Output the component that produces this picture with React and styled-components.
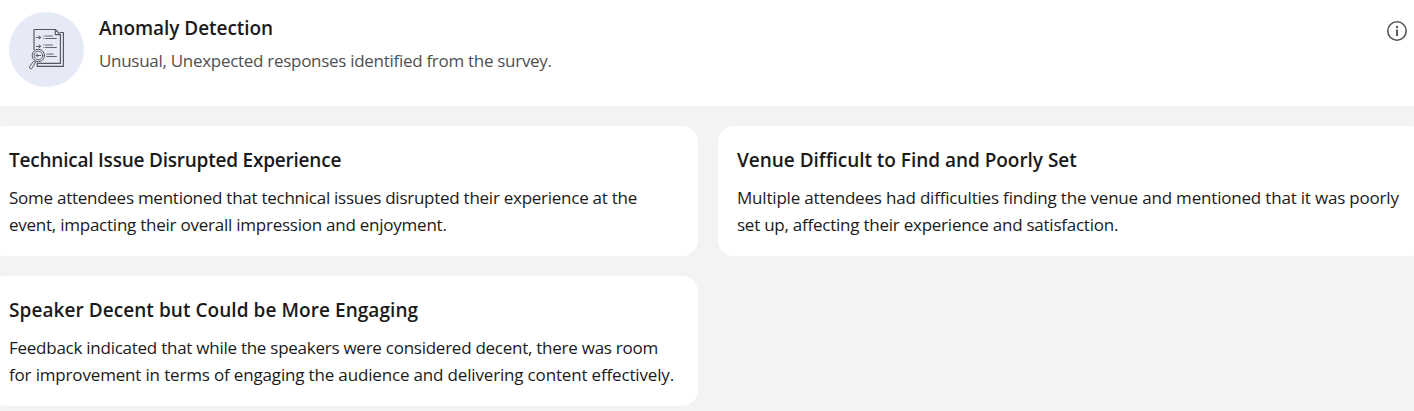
import React from "react";
import styled, { createGlobalStyle } from "styled-components";

const GlobalStyle = createGlobalStyle`
  *, *::before, *::after { box-sizing: border-box; }
  body {
    margin: 0;
    background: #f3f3f3;
    font-family: "Segoe UI", "Open Sans", "Noto Sans", sans-serif;
    font-variant-ligatures: none;
    color: #1a1a1a;
    overflow: hidden;
  }
  h2, h3, p { margin: 0; }
`;

const Page = styled.main`
  height: 411px;
  overflow: hidden;
`;

const Header = styled.header`
  display: flex;
  align-items: flex-start;
  height: 106px;
  padding: 12px 7px 0 9px;
  background: #fff;
`;

const IconBadge = styled.div`
  flex: none;
  width: 75px;
  height: 75px;
  margin-right: 15px;
  border-radius: 50%;
  background: #e6e9f6;

  svg { display: block; }
`;

const HeaderText = styled.div`
  flex: 1;
  padding-top: 2px;
`;

const Title = styled.h2`
  font-size: 19px;
  font-weight: 600;
  line-height: 28px;
  letter-spacing: ${(p) => p.$tracking || 0}px;
  white-space: nowrap;
`;

const Subtitle = styled.p`
  margin-top: 5px;
  font-size: 17px;
  line-height: 27px;
  color: #505050;
  letter-spacing: ${(p) => p.$tracking || 0}px;
`;

const InfoButton = styled.button`
  flex: none;
  margin-top: 9px;
  padding: 0;
  border: 0;
  background: none;

  svg { display: block; }
`;

const CardGrid = styled.section`
  display: grid;
  grid-template-columns: repeat(2, 708px);
  grid-auto-rows: 130px;
  gap: 20px;
  margin: 20px 0 0 -10px;
`;

const Card = styled.article`
  padding: 20px 19px;
  border-radius: 16px;
  background: #fff;
`;

const CardBody = styled.p`
  margin-top: 10px;
  font-size: 17px;
  line-height: 27px;
`;

const Line = styled.span`
  display: block;
  white-space: nowrap;
  letter-spacing: ${(p) => p.$tracking || 0}px;
`;

const cards = [
  {
    title: "Technical Issue Disrupted Experience",
    tracking: -0.22,
    lines: [
      ["Some attendees mentioned that technical issues disrupted their experience at the", -0.26],
      ["event, impacting their overall impression and enjoyment.", -0.24],
    ],
  },
  {
    title: "Venue Difficult to Find and Poorly Set",
    tracking: -0.03,
    lines: [
      ["Multiple attendees had difficulties finding the venue and mentioned that it was poorly", -0.19],
      ["set up, affecting their experience and satisfaction.", -0.24],
    ],
  },
  {
    title: "Speaker Decent but Could be More Engaging",
    tracking: 0.06,
    lines: [
      ["Feedback indicated that while the speakers were considered decent, there was room", -0.256],
      ["for improvement in terms of engaging the audience and delivering content effectively.", -0.165],
    ],
  },
];

function ReportSearchIcon() {
  return (
    <svg width="75" height="75" viewBox="9 12 75 75" fill="none" stroke="#55565e" strokeLinecap="round" strokeLinejoin="round">
      <path d="M34 49.5V29.5H55.3L60.4 34.6V63.4H37.5" strokeWidth="1.15" />
      <path d="M55.3 29.5V34.6H60.4" strokeWidth="1.15" />
      <path d="M60.4 32.5H63.4V66.4H37.2V63.4" strokeWidth="1.15" />
      <path d="M36.3 37.4H40.6M39 35.9L40.8 37.4L39 38.9M36.3 46.4H40.6M39 44.9L40.8 46.4L39 47.9" strokeWidth="1" />
      <path d="M45.2 36H52.6M45.2 38.5H56.4M45.2 45H52.6M45.2 47.5H56.4M46.8 54.1H53M46.8 56.5H56.4" strokeWidth="0.9" />
      <path d="M43.3 36V36.1M43.3 38.4V38.5M43.3 45V45.1M43.3 47.4V47.5" strokeWidth="0.9" />
      <circle cx="38.4" cy="55.5" r="6.2" fill="#e6e9f6" strokeWidth="1" />
      <circle cx="38.4" cy="55.5" r="4.3" strokeWidth="0.9" />
      <path d="M36 55.5H40.8M37.8 53.9L36 55.5L37.8 57.1" strokeWidth="0.95" />
      <path d="M33.3 61.7L29.5 66.8C28.8 68.4 31 69.7 32 68.2L35.4 62.6Z" strokeWidth="0.95" fill="#e6e9f6" />
    </svg>
  );
}

function InfoIcon() {
  return (
    <svg width="20" height="20" viewBox="0 0 20 20" fill="none" stroke="#555">
      <circle cx="10" cy="10" r="9.2" strokeWidth="1.6" />
      <path d="M10 8.5V15" strokeWidth="1.9" />
      <circle cx="10" cy="6" r="1.2" fill="#555" stroke="none" />
    </svg>
  );
}

export default function App() {
  return (
    <Page>
      <GlobalStyle />
      <Header>
        <IconBadge><ReportSearchIcon /></IconBadge>
        <HeaderText>
          <Title $tracking={-0.06}>Anomaly Detection</Title>
          <Subtitle $tracking={-0.29}>Unusual, Unexpected responses identified from the survey.</Subtitle>
        </HeaderText>
        <InfoButton aria-label="More information"><InfoIcon /></InfoButton>
      </Header>
      <CardGrid>
        {cards.map((card) => (
          <Card key={card.title}>
            <Title as="h3" $tracking={card.tracking}>{card.title}</Title>
            <CardBody>
              {card.lines.map(([text, tracking]) => (
                <Line key={text} $tracking={tracking}>{text}</Line>
              ))}
            </CardBody>
          </Card>
        ))}
      </CardGrid>
    </Page>
  );
}
